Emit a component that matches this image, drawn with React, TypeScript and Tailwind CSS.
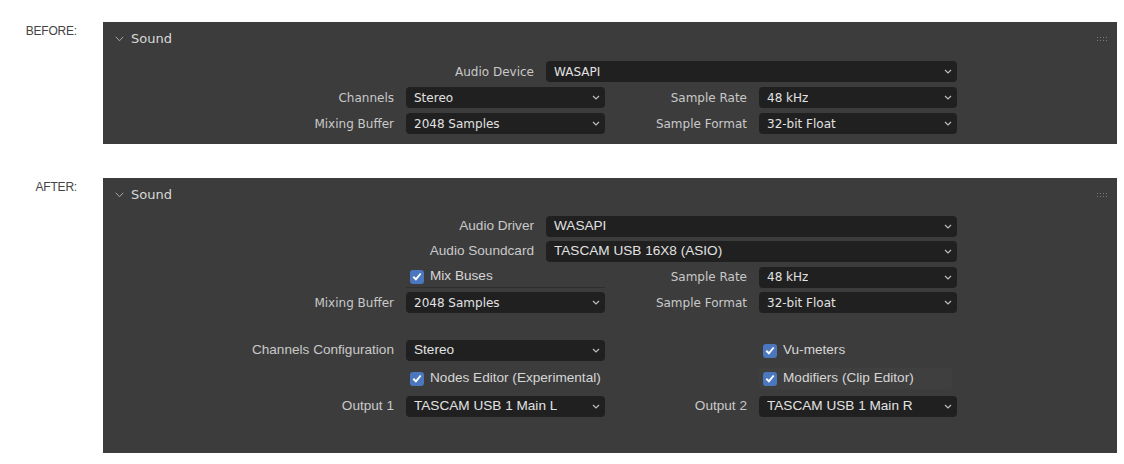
const blender = "font-['DejaVu_Sans',sans-serif] text-[12px]";
const arial = "font-['Liberation_Sans',Arial,sans-serif] text-[13.6px]";

function Chevron() {
  return (
    <svg width="8" height="5" viewBox="0 0 8 5" className="shrink-0">
      <polyline points="1,1 4,4 7,1" fill="none" stroke="#bdbdbd" strokeWidth="1.2" />
    </svg>
  );
}

function Field({ value, width, font }: { value: string; width: string; font: string }) {
  return (
    <div
      className={`${width} h-[21px] rounded-[4px] bg-[#202020] flex items-center justify-between pl-2 pr-[5px] text-[#e2e2e2] ${font}`}
    >
      <span className="truncate">{value}</span>
      <Chevron />
    </div>
  );
}

function Label({ text, width, font }: { text: string; width: string; font: string }) {
  return (
    <div className={`${width} shrink-0 text-right pr-[12px] text-[#c9c9c9] ${font}`}>{text}</div>
  );
}

function Check({ text, font, boxed }: { text: string; font: string; boxed?: string }) {
  return (
    <div className={`h-[21px] flex items-center gap-[6px] pl-[4px] ${boxed ?? ""}`}>
      <div className="h-[14px] w-[14px] rounded-[3px] bg-[#4a77bd] flex items-center justify-center">
        <svg width="10" height="9" viewBox="0 0 10 9">
          <polyline points="1.3,4.8 3.9,7.3 8.7,1.5" fill="none" stroke="#ffffff" strokeWidth="1.9" />
        </svg>
      </div>
      <span className={`text-[#d6d6d6] ${font}`}>{text}</span>
    </div>
  );
}

function Grip() {
  return (
    <div className="grid grid-cols-4 gap-x-[2px] gap-y-[2px] mr-[10px]">
      {Array.from({ length: 8 }).map((_, i) => (
        <div key={i} className="h-px w-px bg-[#7a7a7a]" />
      ))}
    </div>
  );
}

function Header() {
  return (
    <div className="h-[34px] flex items-center justify-between pl-[12px]">
      <div className="flex items-center gap-[7px]">
        <svg width="9" height="6" viewBox="0 0 9 6">
          <polyline points="0.8,0.8 4.5,4.8 8.2,0.8" fill="none" stroke="#a8a8a8" strokeWidth="1" />
        </svg>
        <span className={`${blender} text-[13px] text-[#d8d8d8]`}>Sound</span>
      </div>
      <Grip />
    </div>
  );
}

function Side({ text }: { text: string }) {
  return (
    <div className="w-[77px] shrink-0 text-right font-['Liberation_Sans',Arial,sans-serif] text-[12px] tracking-[-0.2px] text-[#444444]">
      {text}
    </div>
  );
}

export default function App() {
  return (
    <div className="w-[1124px] h-[464px] bg-white pt-[22px]">
      {/* Before */}
      <div className="flex items-start gap-[26px]">
        <Side text="BEFORE:" />
        <div className="w-[1014px] h-[122px] bg-[#3c3c3c]">
          <Header />
          <div className="flex flex-col gap-[5px] mt-[5px]">
            <div className="flex items-center">
              <Label text="Audio Device" width="w-[443px]" font={blender} />
              <Field value="WASAPI" width="w-[411px]" font={blender} />
            </div>
            <div className="flex items-center">
              <Label text="Channels" width="w-[303px]" font={blender} />
              <Field value="Stereo" width="w-[199px]" font={blender} />
              <Label text="Sample Rate" width="w-[154px]" font={blender} />
              <Field value="48 kHz" width="w-[198px]" font={blender} />
            </div>
            <div className="flex items-center">
              <Label text="Mixing Buffer" width="w-[303px]" font={blender} />
              <Field value="2048 Samples" width="w-[199px]" font={blender} />
              <Label text="Sample Format" width="w-[154px]" font={blender} />
              <Field value="32-bit Float" width="w-[198px]" font={blender} />
            </div>
          </div>
        </div>
      </div>

      {/* After */}
      <div className="flex items-start gap-[26px] mt-[34px]">
        <Side text="AFTER:" />
        <div className="w-[1014px] h-[275px] bg-[#3c3c3c]">
          <Header />
          <div className="flex flex-col gap-[4px] mt-[4px]">
            <div className="flex items-center">
              <Label text="Audio Driver" width="w-[443px]" font={arial} />
              <Field value="WASAPI" width="w-[411px]" font={arial} />
            </div>
            <div className="flex items-center">
              <Label text="Audio Soundcard" width="w-[443px]" font={arial} />
              <Field value="TASCAM USB 16X8 (ASIO)" width="w-[411px]" font={arial} />
            </div>
            <div className="flex items-center">
              <div className="w-[303px] shrink-0" />
              <div className="w-[199px] border-b border-[#2f2f2f]">
                <Check text="Mix Buses" font={arial} />
              </div>
              <Label text="Sample Rate" width="w-[154px]" font={blender} />
              <Field value="48 kHz" width="w-[198px]" font={blender} />
            </div>
            <div className="flex items-center">
              <Label text="Mixing Buffer" width="w-[303px]" font={blender} />
              <Field value="2048 Samples" width="w-[199px]" font={blender} />
              <Label text="Sample Format" width="w-[154px]" font={blender} />
              <Field value="32-bit Float" width="w-[198px]" font={blender} />
            </div>
          </div>

          <div className="flex flex-col gap-[7px] mt-[27px]">
            <div className="flex items-center">
              <Label text="Channels Configuration" width="w-[303px]" font={arial} />
              <Field value="Stereo" width="w-[199px]" font={arial} />
              <div className="w-[154px] shrink-0" />
              <div className="w-[198px]">
                <Check text="Vu-meters" font={arial} />
              </div>
            </div>
            <div className="flex items-center">
              <div className="w-[303px] shrink-0" />
              <div className="w-[199px]">
                <Check text="Nodes Editor (Experimental)" font={arial} />
              </div>
              <div className="w-[154px] shrink-0" />
              <div className="w-[193px]">
                <Check text="Modifiers (Clip Editor)" font={arial} boxed="bg-[#3f3f3f] rounded-[3px]" />
              </div>
            </div>
            <div className="flex items-center">
              <Label text="Output 1" width="w-[303px]" font={arial} />
              <Field value="TASCAM USB 1 Main L" width="w-[199px]" font={arial} />
              <Label text="Output 2" width="w-[154px]" font={arial} />
              <Field value="TASCAM USB 1 Main R" width="w-[198px]" font={arial} />
            </div>
          </div>
        </div>
      </div>
    </div>
  );
}
